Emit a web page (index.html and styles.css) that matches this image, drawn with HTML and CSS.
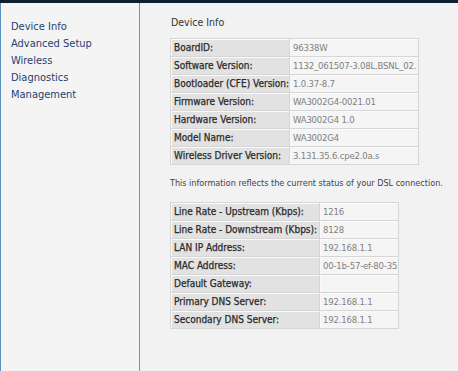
FILE: index.html
```html
<!DOCTYPE html>
<html lang="en">
<head>
  <meta charset="UTF-8" />
  <title>Device Info</title>
  <link rel="stylesheet" href="styles.css">
</head>
<body>
  <div class="topbar"></div>
  <div class="page">
    <div class="menu">
      <a href="#">Device Info</a>
      <a href="#">Advanced Setup</a>
      <a href="#">Wireless</a>
      <a href="#">Diagnostics</a>
      <a href="#">Management</a>
    </div>
    <div class="content">
      <div class="title">Device Info</div>
      <table class="info first">
        <tr><td class="label">BoardID:</td><td class="value">96338W</td></tr>
        <tr><td class="label">Software Version:</td><td class="value">1132_061507-3.08L.BSNL_02.</td></tr>
        <tr><td class="label">Bootloader (CFE) Version:</td><td class="value">1.0.37-8.7</td></tr>
        <tr><td class="label">Firmware Version:</td><td class="value">WA3002G4-0021.01</td></tr>
        <tr><td class="label">Hardware Version:</td><td class="value">WA3002G4 1.0</td></tr>
        <tr><td class="label">Model Name:</td><td class="value">WA3002G4</td></tr>
        <tr><td class="label">Wireless Driver Version:</td><td class="value">3.131.35.6.cpe2.0a.s</td></tr>
      </table>
      <p class="note">This information reflects the current status of your DSL connection.</p>
      <table class="info second">
        <tr><td class="label">Line Rate - Upstream (Kbps):</td><td class="value">1216</td></tr>
        <tr><td class="label">Line Rate - Downstream (Kbps):</td><td class="value">8128</td></tr>
        <tr><td class="label">LAN IP Address:</td><td class="value">192.168.1.1</td></tr>
        <tr><td class="label">MAC Address:</td><td class="value">00-1b-57-ef-80-35</td></tr>
        <tr><td class="label">Default Gateway:</td><td class="value"></td></tr>
        <tr><td class="label">Primary DNS Server:</td><td class="value">192.168.1.1</td></tr>
        <tr><td class="label">Secondary DNS Server:</td><td class="value">192.168.1.1</td></tr>
      </table>
    </div>
  </div>
</body>
</html>
```

FILE: styles.css
```css
body {
  margin: 0;
  padding: 0;
  background-color: #f2f2f2;
  font-family: "DejaVu Sans Condensed", "DejaVu Sans", sans-serif;
  overflow: hidden;
}
.topbar {
  height: 3px;
  background-color: #0c2031;
}
.page {
  display: flex;
  height: 368px;
}
.menu {
  width: 140px;
  flex-shrink: 0;
  box-sizing: border-box;
  border-left: 1px solid #5b93bf;
  border-right: 1px solid #7f8fa0;
  background-color: #f4f4f4;
  padding-top: 15px;
  display: flex;
  flex-direction: column;
}
.menu a {
  color: #1f3f70;
  text-decoration: none;
  font-size: 11px;
  line-height: 17px;
  padding-left: 10px;
}
.content {
  padding-left: 30px;
  padding-top: 12px;
}
.title {
  font-size: 10.5px;
  color: #333;
  line-height: 14px;
  margin-bottom: 9px;
  padding-left: 1px;
}
.info {
  border-collapse: collapse;
  table-layout: fixed;
  border: 1px solid #c4c4c4;
  font-size: 10px;
}
.info td {
  border: 1px solid #d6d6d6;
  box-shadow: inset 1px 1px 0 #fafafa;
  height: 17px;
  padding: 0 1px 0 3px;
  white-space: nowrap;
  overflow: hidden;
}
.info .label {
  background-color: #e2e2e2;
  color: #2a2a2a;
  -webkit-text-stroke: 0.25px #2a2a2a;
}
.info .value {
  background-color: #f5f5f5;
  color: #808080;
  font-size: 9.5px;
  letter-spacing: -0.2px;
}
.first { width: 249px; }
.first .label { width: 114px; }
.second { width: 229px; }
.second .label { width: 144px; }
.note {
  font-size: 9px;
  color: #444;
  white-space: nowrap;
  margin: 13px 0 14px 0;
}
```
